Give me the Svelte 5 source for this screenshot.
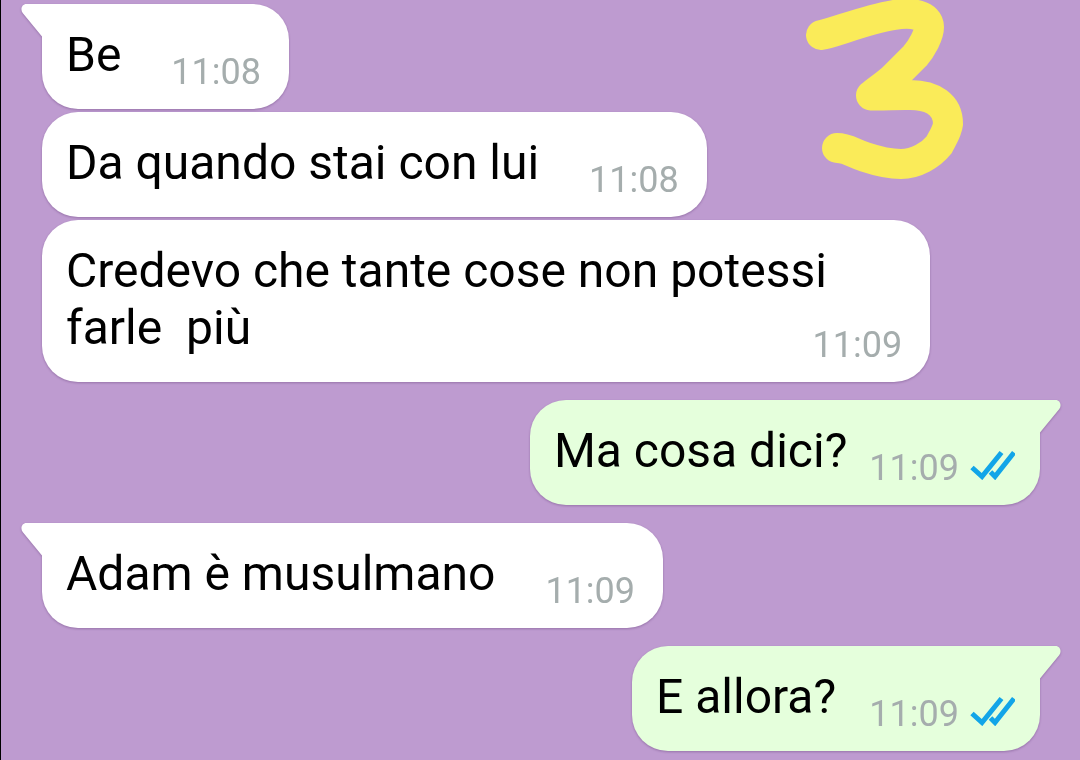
<script>
	const messages = [
		{ text: 'Be', time: '11:08', first: true },
		{ text: 'Da quando stai con lui', time: '11:08' },
		{ text: 'Credevo che tante cose non potessi farle  più', time: '11:09' },
		{ text: 'Ma cosa dici?', time: '11:09', mine: true, first: true },
		{ text: 'Adam è musulmano', time: '11:09', first: true },
		{ text: 'E allora?', time: '11:09', mine: true, first: true }
	];
</script>

<main>
	<ol class="messages">
		{#each messages as message, index (`message-${index}`)}
			<li class="row" class:mine={message.mine} class:first={message.first}>
				<div class="bubble">
					{#if message.first}
						<svg class="tail" viewBox="0 0 22 36" aria-hidden="true">
							<path d="M22 0H5.500C.8 0-1 5.500 1.700 9L21 32.500V36H22Z" />
						</svg>
					{/if}
					<span class="text">{message.text}</span>
					<span class="meta">
						<time>{message.time}</time>
						{#if message.mine}
							<svg class="ticks" viewBox="0 0 45 30" role="img" aria-label="Read">
								<path d="M2 17.500L12 26.500L31.500 2.500M20.500 22L25 26.500L44 2.500" />
							</svg>
						{/if}
					</span>
				</div>
			</li>
		{/each}
	</ol>

	<svg class="doodle" viewBox="0 0 200 190" role="img" aria-label="3">
		<path
			d="M31 35C44 33 74 20 104 15C122 12 139 15 139 27C139 35 132 48 125 56L102 79C94 86 86 91 81 95.500C94 96 108 94.500 120 95C143 95 158 105 158 124C157 132 152 139 149 145C141 155 126 164 111 164C98 164 84 160 75 157C63 153 57 148 47 148"
		/>
	</svg>
</main>

<style>
	:global(body) {
		margin: 0;
		background: #be9bd0;
	}

	main {
		position: relative;
		box-sizing: border-box;
		min-height: 100vh;
		border-left: 1px solid #000;
		background: #be9bd0;
		font-family: Roboto, sans-serif;
	}

	.messages {
		display: flex;
		flex-direction: column;
		gap: 3px;
		margin: 0;
		padding: 4px 40px 8px 41px;
		list-style: none;
	}

	.row {
		display: flex;
	}

	.row.first:not(:first-child) {
		margin-top: 15px;
	}

	.mine {
		justify-content: flex-end;
	}

	.bubble {
		position: relative;
		display: flow-root;
		box-sizing: border-box;
		max-width: 89%;
		padding: 22px 28px 16px 24px;
		border-radius: 36px;
		background: #fff;
		color: #000;
		font-size: 48px;
		line-height: 57px;
		filter: drop-shadow(0 1px 1px rgba(60, 20, 80, 0.3));
	}

	.first .bubble {
		border-top-left-radius: 0;
	}

	.mine .bubble {
		min-width: 408px;
		padding-right: 25px;
		border-top-left-radius: 36px;
		border-top-right-radius: 0;
		background: #e5ffdc;
	}

	.tail {
		position: absolute;
		top: 0;
		left: -21px;
		width: 22px;
		height: 36px;
		fill: #fff;
	}

	.mine .tail {
		right: -21px;
		left: auto;
		fill: #e5ffdc;
		transform: scaleX(-1);
	}

	.text {
		white-space: pre-wrap;
	}

	/* floats to the end of the last line of text */
	.meta {
		float: right;
		display: flex;
		align-items: center;
		gap: 11px;
		margin: 25px 0 0 50px;
		color: #a5adad;
		font-size: 36px;
		line-height: 42px;
	}

	.mine .meta {
		margin-left: 22px;
	}

	.ticks {
		width: 45px;
		height: 30px;
		margin-bottom: 6px;
		fill: none;
		stroke: #12a5e8;
		stroke-width: 5;
	}

	.doodle {
		position: absolute;
		top: 0;
		right: 90px;
		width: 200px;
		height: 190px;
		fill: none;
		stroke: #faeb59;
		stroke-width: 30;
		stroke-linecap: round;
		stroke-linejoin: round;
	}
</style>
